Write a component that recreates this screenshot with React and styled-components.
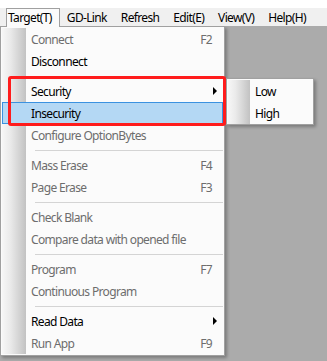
import React from 'react';
import styled, { createGlobalStyle, css } from 'styled-components';

const Global = createGlobalStyle`
  html, body { margin: 0; padding: 0; background: #ababab; }
  body { font-family: "Noto Sans", "Open Sans", sans-serif; }
`;

const Window = styled.div`
  position: relative;
  width: 327px;
  height: 361px;
  overflow: hidden;
  display: flex;
  flex-direction: column;
  background: #ababab;
  font-family: "Noto Sans", "Open Sans", sans-serif;
  font-size: 12px;
  letter-spacing: -0.65px;
`;

const TitleEdge = styled.div`
  flex: none;
  height: 8px;
  background: #ffffff;
`;

const MenuBar = styled.div`
  flex: none;
  position: relative;
  z-index: 3;
  display: flex;
  height: 18px;
  padding-left: 6px;
  background: #f0f0f0;
`;

const TopItem = styled.div`
  box-sizing: border-box;
  display: flex;
  align-items: center;
  height: 18px;
  padding: 0 7px;
  color: #000;
  white-space: nowrap;
  ${p => p.$open && css`
    height: 19px;
    margin-bottom: -1px;
    padding: 0 7px 1px 1px;
    background: #fbfbfb;
    border: 1px solid #a0a0a0;
    border-bottom: none;
  `}
`;

const Workspace = styled.div`
  flex: 1;
  background: #ababab;
`;

const DropDown = styled.div`
  position: absolute;
  z-index: 2;
  box-sizing: border-box;
  left: ${p => p.$left}px;
  top: ${p => p.$top}px;
  width: ${p => p.$width}px;
  padding: 1px 1px ${p => (p.$bottomPad ? 1 : 0)}px 1px;
  border: 1px solid #a0a0a0;
  background: #fbfbfb;
  box-shadow: 2px 2px 3px 0 rgba(0, 0, 0, 0.28);
`;

const ItemList = styled.div`
  display: flex;
  flex-direction: column;
  background:
    linear-gradient(to right, #f7f7f7 0%, #eaeaea 35%, #c2c2c2 100%) 0 0 / ${p => p.$gutter}px 100% no-repeat,
    #fbfbfb;
`;

const Item = styled.div`
  box-sizing: border-box;
  display: flex;
  align-items: center;
  height: 22px;
  padding: 0 10px 0 ${p => p.$indent}px;
  border: 1px solid transparent;
  color: ${p => (p.$disabled ? '#6d6d6d' : '#000000')};
  white-space: nowrap;
  ${p => p.$selected && css`
    background: #b4d8f4;
    border-color: #3b92e0;
  `}
`;

const Label = styled.span`
  flex: 1;
`;

const Shortcut = styled.span`
  flex: none;
`;

const Arrow = styled.span`
  flex: none;
  width: 0;
  height: 0;
  margin-right: -5px;
  border-left: 4px solid #000;
  border-top: 4px solid transparent;
  border-bottom: 4px solid transparent;
`;

const Separator = styled.div`
  height: 8px;
  box-sizing: border-box;
  padding: 4px 0 3px 33px;
  &::after {
    content: '';
    display: block;
    height: 1px;
    background: #d4d4d4;
  }
`;

const Callout = styled.div`
  position: absolute;
  z-index: 5;
  left: 8px;
  top: 76px;
  width: 218px;
  height: 50px;
  box-sizing: border-box;
  border: 3px solid #ff1c1c;
  border-radius: 3px;
`;

const topMenus = ['Target(T)', 'GD-Link', 'Refresh', 'Edit(E)', 'View(V)', 'Help(H)'];

const targetMenu = [
  { label: 'Connect', key: 'F2', disabled: true },
  { label: 'Disconnect' },
  { sep: true },
  { label: 'Security', submenu: true },
  { label: 'Insecurity', selected: true },
  { label: 'Configure OptionBytes', disabled: true },
  { sep: true },
  { label: 'Mass Erase', key: 'F4', disabled: true },
  { label: 'Page Erase', key: 'F3', disabled: true },
  { sep: true },
  { label: 'Check Blank', disabled: true },
  { label: 'Compare data with opened file', disabled: true },
  { sep: true },
  { label: 'Program', key: 'F7', disabled: true },
  { label: 'Continuous Program', disabled: true },
  { sep: true },
  { label: 'Read Data', submenu: true },
  { label: 'Run App', key: 'F9', disabled: true },
];

const securityMenu = [{ label: 'Low' }, { label: 'High' }];

function MenuItems({ items, indent }) {
  return items.map((it, i) =>
    it.sep ? (
      <Separator key={i} />
    ) : (
      <Item key={i} $indent={indent} $disabled={it.disabled} $selected={it.selected}>
        <Label>{it.label}</Label>
        {it.key && <Shortcut>{it.key}</Shortcut>}
        {it.submenu && <Arrow />}
      </Item>
    )
  );
}

export default function App() {
  return (
    <>
      <Global />
      <Window>
        <TitleEdge />
        <MenuBar>
          {topMenus.map((m, i) => (
            <TopItem key={m} $open={i === 0}>{m}</TopItem>
          ))}
        </MenuBar>
        <Workspace />
        <DropDown $left={0} $top={26} $width={225} $bottomPad>
          <ItemList $gutter={24}>
            <MenuItems items={targetMenu} indent={28} />
          </ItemList>
        </DropDown>
        <DropDown $left={226} $top={78} $width={88}>
          <ItemList $gutter={22}>
            <MenuItems items={securityMenu} indent={26} />
          </ItemList>
        </DropDown>
        <Callout />
      </Window>
    </>
  );
}
